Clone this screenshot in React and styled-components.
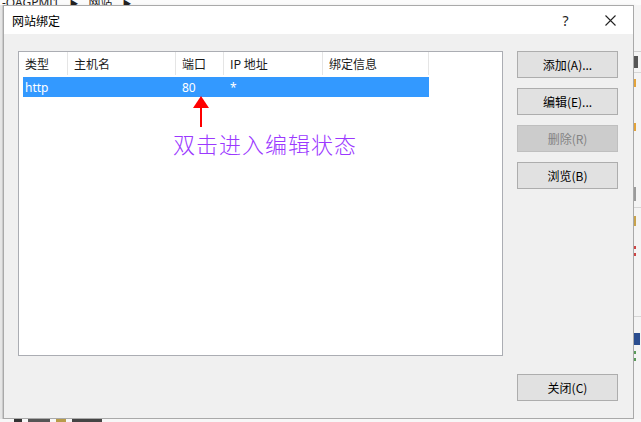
import React from "react";
import styled, { createGlobalStyle } from "styled-components";

const GlobalStyle = createGlobalStyle`
  html, body {
    margin: 0;
    padding: 0;
    background: #f3f3f3;
    overflow: hidden;
  }
  body {
    font-family: "Noto Sans", "Noto Sans CJK SC", sans-serif;
    font-size: 12px;
    color: #000;
  }
`;

const Screen = styled.div`
  width: 641px;
  height: 422px;
  display: flex;
  flex-direction: column;
  overflow: hidden;
  background: #f3f3f3;
`;

const TopStrip = styled.div`
  height: 5px;
  overflow: hidden;
  background: #fbfbfb;
  display: flex;
  align-items: flex-end;
`;

const Crumbs = styled.div`
  margin-bottom: -6px;
  padding-left: 2px;
  font-size: 12px;
  line-height: 14px;
  color: #222;
  white-space: nowrap;
  font-family: "Noto Sans", "Noto Sans CJK SC", sans-serif;
  span {
    margin: 0 10px;
    font-size: 9px;
  }
`;

const Middle = styled.div`
  display: flex;
  height: 414px;
`;

const LeftStrip = styled.div`
  width: 3px;
  background: #e6e6e6;
  border-right: 1px solid #d0d0d0;
  box-sizing: border-box;
`;

const RightStrip = styled.div`
  flex: 1;
  background: #f4f4f4;
  display: flex;
  flex-direction: column;
  overflow: hidden;
`;

const Mark = styled.div`
  margin-top: ${(p) => p.$top}px;
  height: ${(p) => p.$h}px;
  width: ${(p) => p.$w || 7}px;
  background: ${(p) => p.$c};
  flex-shrink: 0;
`;

const Dialog = styled.div`
  width: 631px;
  box-sizing: border-box;
  border: 1px solid #a9a9a9;
  background: #f0f0f0;
  display: flex;
  flex-direction: column;
  box-shadow: 1px 1px 3px rgba(0, 0, 0, 0.15);
`;

const TitleBar = styled.div`
  height: 28px;
  background: #fff;
  display: flex;
  align-items: center;
  padding-left: 8px;
  font-family: "Noto Sans CJK SC", sans-serif;
  font-size: 12px;
`;

const Title = styled.div`
  flex: 1;
  padding-top: 1px;
`;

const TitleButton = styled.div`
  width: 45px;
  height: 28px;
  display: flex;
  align-items: center;
  justify-content: center;
  font-family: "Noto Sans", sans-serif;
  font-size: 14px;
  color: #222;
`;

const Body = styled.div`
  flex: 1;
  display: flex;
  padding: 17px 15px 17px 14px;
  gap: 14px;
`;

const ListBox = styled.div`
  position: relative;
  width: 486px;
  height: 305px;
  box-sizing: border-box;
  border: 1px solid #abadb3;
  background: #fff;
`;

const HeaderRow = styled.div`
  display: grid;
  grid-template-columns: 49px 108px 48px 99px 106px;
  height: 23px;
`;

const HeaderCell = styled.div`
  display: flex;
  align-items: center;
  padding-left: 6px;
  border-right: 1px solid #e5e5e5;
  font-family: "Noto Sans CJK SC", sans-serif;
  font-size: 12px;
  color: #1a1a1a;
  white-space: nowrap;
`;

const DataRow = styled.div`
  margin: 2px 0 0 4px;
  display: grid;
  grid-template-columns: 45px 108px 48px 99px 106px;
  height: 20px;
  width: 406px;
  background: ${(p) => (p.$selected ? "#3399ff" : "transparent")};
  color: ${(p) => (p.$selected ? "#fff" : "#000")};
`;

const DataCell = styled.div`
  display: flex;
  align-items: center;
  padding-left: ${(p) => (p.$first ? 2 : 6)}px;
  font-family: "Noto Sans", "Noto Sans CJK SC", sans-serif;
  font-size: 12px;
  white-space: nowrap;
`;

const Arrow = styled.svg`
  position: absolute;
  left: 173px;
  top: 44px;
`;

const Note = styled.div`
  position: absolute;
  left: 154px;
  top: 75px;
  font-family: "Noto Sans CJK SC", serif;
  font-weight: 300;
  font-size: 22px;
  letter-spacing: 1px;
  color: #9b38ff;
  white-space: nowrap;
`;

const Side = styled.div`
  display: flex;
  flex-direction: column;
  width: 101px;
`;

const Buttons = styled.div`
  display: flex;
  flex-direction: column;
  gap: 10px;
  flex: 1;
`;

const Button = styled.button`
  width: 101px;
  height: 27px;
  box-sizing: border-box;
  border: 1px solid ${(p) => (p.disabled ? "#bfbfbf" : "#adadad")};
  background: ${(p) => (p.disabled ? "#cccccc" : "#e1e1e1")};
  color: ${(p) => (p.disabled ? "#838383" : "#000")};
  font-family: "Noto Sans CJK SC", sans-serif;
  font-size: 12px;
  padding: 0;
  border-radius: 0;
  display: flex;
  align-items: center;
  justify-content: center;
`;

const BottomStrip = styled.div`
  flex: 1;
  background: #f7f7f7;
  overflow: hidden;
  display: flex;
  gap: 6px;
  padding-left: 14px;
`;

const Chip = styled.div`
  width: ${(p) => p.$w}px;
  height: 3px;
  background: ${(p) => p.$c};
`;

const columns = ["类型", "主机名", "端口", "IP 地址", "绑定信息"];
const rows = [{ type: "http", host: "", port: "80", ip: "*", info: "" }];

export default function App() {
  return (
    <>
      <GlobalStyle />
      <Screen>
        <TopStrip>
          <Crumbs>
            -OAGPMJ1<span>▶</span>网站<span>▶</span>
          </Crumbs>
        </TopStrip>
        <Middle>
          <LeftStrip />
          <Dialog>
            <TitleBar>
              <Title>网站绑定</Title>
              <TitleButton>?</TitleButton>
              <TitleButton>
                <svg width="11" height="11" viewBox="0 0 11 11">
                  <path d="M0.5 0.5 L10.5 10.5 M10.5 0.5 L0.5 10.5" stroke="#222" strokeWidth="1.1" fill="none" />
                </svg>
              </TitleButton>
            </TitleBar>
            <Body>
              <ListBox>
                <HeaderRow>
                  {columns.map((c) => (
                    <HeaderCell key={c}>{c}</HeaderCell>
                  ))}
                </HeaderRow>
                {rows.map((r, i) => (
                  <DataRow key={i} $selected>
                    <DataCell $first>{r.type}</DataCell>
                    <DataCell>{r.host}</DataCell>
                    <DataCell>{r.port}</DataCell>
                    <DataCell>{r.ip}</DataCell>
                    <DataCell>{r.info}</DataCell>
                  </DataRow>
                ))}
                <Arrow width="18" height="32" viewBox="0 0 18 32">
                  <path d="M9 0 L17 12 L1 12 Z" fill="#ff0000" />
                  <rect x="8" y="11" width="2" height="20" fill="#ff0000" />
                </Arrow>
                <Note>双击进入编辑状态</Note>
              </ListBox>
              <Side>
                <Buttons>
                  <Button>添加(A)...</Button>
                  <Button>编辑(E)...</Button>
                  <Button disabled>删除(R)</Button>
                  <Button>浏览(B)</Button>
                </Buttons>
                <Button>关闭(C)</Button>
              </Side>
            </Body>
          </Dialog>
          <RightStrip>
            <Mark $top={46} $h={1} $c="#cfcfcf" />
            <Mark $top={4} $h={12} $w={4} $c="#555" />
            <Mark $top={4} $h={1} $c="#d6d6d6" />
            <Mark $top={6} $h={8} $w={2} $c="#e3a33a" />
            <Mark $top={36} $h={8} $w={2} $c="#e3a33a" />
            <Mark $top={56} $h={14} $w={2} $c="#9a9a9a" />
            <Mark $top={6} $h={1} $c="#d6d6d6" />
            <Mark $top={8} $h={10} $w={2} $c="#c7a24b" />
            <Mark $top={20} $h={3} $w={2} $c="#c44" />
            <Mark $top={4} $h={3} $w={2} $c="#c44" />
            <Mark $top={60} $h={1} $c="#d6d6d6" />
            <Mark $top={16} $h={12} $w={6} $c="#2a4d8f" />
            <Mark $top={6} $h={3} $w={2} $c="#5a9a5a" />
            <Mark $top={4} $h={3} $w={2} $c="#5a9a5a" />
          </RightStrip>
        </Middle>
        <BottomStrip>
          <Chip $w={8} $c="#333" />
          <Chip $w={22} $c="#555" />
          <Chip $w={10} $c="#b89b4a" />
          <Chip $w={30} $c="#444" />
        </BottomStrip>
      </Screen>
    </>
  );
}
